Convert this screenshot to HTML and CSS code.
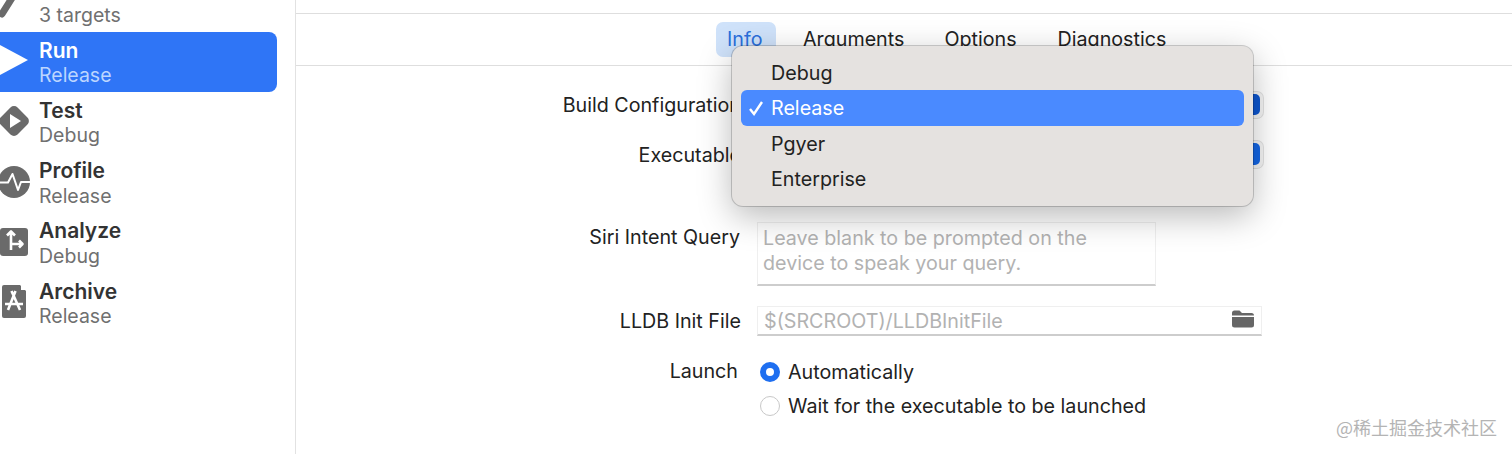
FILE: index.html
```html
<!DOCTYPE html>
<html lang="en">
<head>
<meta charset="utf-8">
<title>Scheme editor</title>
<link rel="stylesheet" href="styles.css">
</head>
<body>
<div class="window">
  <aside class="sidebar">
    <ul class="actions">
      <li class="action">
        <svg class="icon" viewBox="0 0 30 60"><path class="glyph-stroke" d="M2 42 L12 26"/></svg>
        <div class="action-text"><span class="action-name"></span><span class="action-sub">3 targets</span></div>
      </li>
      <li class="action is-selected">
        <svg class="icon" viewBox="0 0 30 60"><path class="glyph-white" d="M-1 12.5 L28 28 L-1 43.5 Z"/></svg>
        <div class="action-text"><span class="action-name">Run</span><span class="action-sub">Release</span></div>
      </li>
      <li class="action">
        <svg class="icon" viewBox="0 0 30 60"><rect class="glyph" x="2" y="17" width="24" height="24" rx="5" transform="rotate(45 14 29)"/><path class="glyph-white" d="M10 22 L21 29 L10 36 Z"/></svg>
        <div class="action-text"><span class="action-name">Test</span><span class="action-sub">Debug</span></div>
      </li>
      <li class="action">
        <svg class="icon" viewBox="0 0 30 60"><circle class="glyph" cx="14" cy="29" r="16"/><path class="pulse" d="M-2 29.5 H8 L12.5 21 L18 37 L21 29 H30"/></svg>
        <div class="action-text"><span class="action-name">Profile</span><span class="action-sub">Release</span></div>
      </li>
      <li class="action">
        <svg class="icon" viewBox="0 0 30 60"><rect class="glyph" x="0" y="15" width="28" height="28" rx="3"/><path class="pulse-bold" d="M11 37 V19 M7 22.5 L11 18.5 L15 22.5 M11 31 H22 M19 27.5 L22.5 31 L19 34.5"/></svg>
        <div class="action-text"><span class="action-name">Analyze</span><span class="action-sub">Debug</span></div>
      </li>
      <li class="action">
        <svg class="icon" viewBox="0 0 30 60"><path class="glyph" d="M4 12 H20 L26 18 V43 Q26 45 24 45 H4 Q2 45 2 43 V14 Q2 12 4 12 Z"/><path class="glyph-white" d="M21 11 L27 17 H21 Z"/><path class="pulse-bold" d="M15.5 18 L8 37 M11.5 18 L20 37 M5 31 H23"/></svg>
        <div class="action-text"><span class="action-name">Archive</span><span class="action-sub">Release</span></div>
      </li>
    </ul>
  </aside>

  <main class="main">
    <nav class="tabs">
      <span class="tab is-active">Info</span>
      <span class="tab">Arguments</span>
      <span class="tab">Options</span>
      <span class="tab">Diagnostics</span>
    </nav>

    <form class="form">
      <div class="row row-build">
        <span class="label">Build Configuration</span>
        <div class="popup"><span class="popup-end"></span></div>
      </div>
      <div class="row row-exec">
        <span class="label">Executable</span>
        <div class="popup"><span class="popup-end popup-end-light"></span></div>
      </div>
      <div class="row row-siri">
        <span class="label">Siri Intent Query</span>
        <div class="textarea">Leave blank to be prompted on the<br>device to speak your query.</div>
      </div>
      <div class="row row-lldb">
        <span class="label">LLDB Init File</span>
        <div class="textfield">
          <span>$(SRCROOT)/LLDBInitFile</span>
          <svg class="folder" viewBox="0 0 22 18"><path d="M0 3 Q0 0.5 2.5 0.5 H7.5 L10 3 H19.5 Q22 3 22 5.5 V5.5 H0 Z M0 7 H22 V15 Q22 17.5 19.5 17.5 H2.5 Q0 17.5 0 15 Z"/></svg>
        </div>
      </div>
      <div class="row row-launch">
        <span class="label label-launch">Launch</span>
        <label class="radio-line"><span class="radio is-on"></span>Automatically</label>
      </div>
      <div class="row row-wait">
        <span class="label"></span>
        <label class="radio-line"><span class="radio"></span>Wait for the executable to be launched</label>
      </div>
    </form>
  </main>

  <div class="menu">
    <div class="menu-item">Debug</div>
    <div class="menu-item is-current"><svg class="check" viewBox="0 0 16 16"><path d="M2 9 L6 14 L14 2"/></svg>Release</div>
    <div class="menu-item">Pgyer</div>
    <div class="menu-item">Enterprise</div>
  </div>

  <div class="watermark">@稀土掘金技术社区</div>
</div>
</body>
</html>
```

FILE: styles.css
```css
* { box-sizing: border-box; }
html, body { margin: 0; padding: 0; background: #fff; }
body { font-family: Inter, "Liberation Sans", sans-serif; font-size: 19.7px; color: #222; }

.window { position: relative; display: flex; width: 1512px; height: 454px; overflow: hidden; }

.sidebar { flex: 0 0 296px; height: 454px; border-right: 1.5px solid #e2e2e2; overflow: hidden; }
.actions { list-style: none; margin: -28px 0 0; padding: 0; width: 277px; }
.action { display: flex; align-items: flex-start; height: 60.3px; padding-top: 6.5px; gap: 9px; }
.action.is-selected { height: 60px; background: #2f75f6; border-radius: 0 8px 8px 0; color: #fff; }
.icon { flex: 0 0 30px; width: 30px; height: 60px; margin-top: -6.5px; overflow: visible; }
.glyph { fill: #6a6a6a; }
.glyph-white { fill: #fff; }
.glyph-stroke { fill: none; stroke: #6a6a6a; stroke-width: 7; stroke-linecap: round; }
.pulse { fill: none; stroke: #fff; stroke-width: 2; stroke-linejoin: round; }
.pulse-bold { fill: none; stroke: #fff; stroke-width: 2.6; stroke-linejoin: round; }
.action-text { display: flex; flex-direction: column; }
.action-name { font-weight: 600; font-size: 21px; line-height: 24.5px; min-height: 24.5px; color: #333; }
.action-sub { font-size: 19.5px; line-height: 25px; color: #707070; }
.is-selected .action-name { color: #fff; }
.is-selected .action-sub { color: #bcd6ff; }

.main { flex: 1; min-width: 0; display: flex; flex-direction: column; padding-top: 13px; }
.tabs { display: flex; align-items: center; height: 53px; padding-left: 420px; border-top: 1.5px solid #dedede; border-bottom: 1.5px solid #dedede; gap: 14px; }
.tab { padding: 5px 13px; height: 35px; line-height: 25px; border-radius: 7px; color: #222; }
.tab.is-active { background: #cfe2fa; color: #2a6fdc; width: 60px; padding-left: 11px; }
.tab:last-child { margin-left: 1px; }

.form { display: flex; flex-direction: column; padding-top: 26px; }
.row { display: grid; grid-template-columns: 445px 506px; column-gap: 16px; align-items: center; }
.label { text-align: right; white-space: nowrap; }
.label-launch { padding-right: 3px; }
.row-build { height: 26px; }
.row-exec { height: 27px; margin-top: 23px; }
.row-siri { height: 64px; margin-top: 54px; align-items: start; }
.row-siri .label { padding: 3px 1px 0 0; line-height: 25px; }
.row-lldb { height: 30px; margin-top: 20px; }
.row-launch { height: 20px; margin-top: 24px; }
.row-launch .label { margin-top: -1px; }
.row-wait { height: 20px; margin-top: 16px; }

.popup { position: relative; height: 100%; background: #f6f6f6; border-radius: 6px; box-shadow: 0 0 0 1px #e2e2e2; }
.popup-end { position: absolute; right: 3px; top: 2px; bottom: 3px; width: 30px; background: #0d56d0; border-radius: 0 5px 5px 0; }
.popup-end-light { background: #1366e6; }

.textarea { width: 399px; height: 64px; padding: 3px 5px; line-height: 25px; color: #b2b2b2; background: #fff; border: 1px solid #efefef; border-bottom: 2px solid #cdcdcd; }
.textfield { display: flex; align-items: center; justify-content: space-between; width: 505px; height: 30px; padding: 1px 7px 0 6px; color: #b2b2b2; background: #fff; border: 1px solid #efefef; border-bottom: 2px solid #cdcdcd; }
.folder { width: 22px; height: 18px; fill: #666; margin-top: -4px; }

.radio-line { display: flex; align-items: center; gap: 8px; color: #222; white-space: nowrap; margin-left: 3px; height: 20px; }
.radio { flex: 0 0 20px; width: 20px; height: 20px; border-radius: 50%; background: #fff; border: 1px solid #c8c8c8; }
.radio.is-on { background: #fff; border: 6px solid #1f6ff0; }

.menu { position: absolute; left: 732px; top: 46px; width: 521px; height: 160px; padding: 9px 9px; background: #e5e2e0; border-radius: 11px; box-shadow: 0 0 0 1px rgba(0,0,0,.18), 0 10px 34px rgba(0,0,0,.28); }
.menu-item { position: relative; height: 35.3px; line-height: 37px; padding-left: 30px; color: #222; border-radius: 6px; }
.menu-item.is-current { background: #4a8aff; color: #fff; }
.check { position: absolute; left: 7px; top: 10px; width: 16px; height: 16px; fill: none; stroke: #fff; stroke-width: 2.4; }

.watermark { position: absolute; left: 1336px; top: 414px; font-family: "Noto Sans CJK SC", sans-serif; font-size: 18px; line-height: 26px; color: #b4b4b4; white-space: nowrap; }
```
